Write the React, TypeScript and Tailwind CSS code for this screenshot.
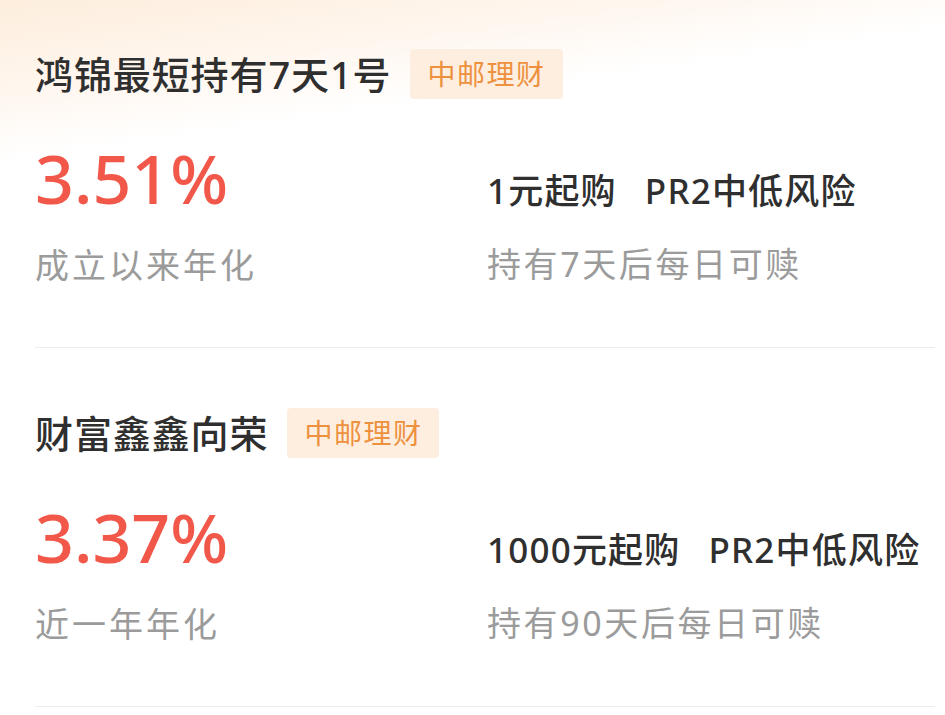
const products = [
  {
    name: '鸿锦最短持有7天1号',
    rate: '3.51%',
    rateLabel: '成立以来年化',
    minBuy: '1元起购',
    risk: 'PR2中低风险',
    redeem: '持有7天后每日可赎',
  },
  {
    name: '财富鑫鑫向荣',
    rate: '3.37%',
    rateLabel: '近一年年化',
    minBuy: '1000元起购',
    risk: 'PR2中低风险',
    redeem: '持有90天后每日可赎',
  },
];

const font = "font-['Noto_Sans','Noto_Sans_CJK_SC',sans-serif]";

function ProductRow({ p }: { p: (typeof products)[number] }) {
  return (
    <div className="pt-[60px] first:pt-[49px]">
      <div className="flex items-center h-[50px]">
        <h3 className="text-[38px] font-medium text-[#2f2f2f] leading-none tracking-[0.9px]">{p.name}</h3>
        <span className="ml-[19px] h-[50px] flex items-center px-[17px] rounded-[4px] bg-[#fdeee0] text-[#ee913e] text-[28px] tracking-[1.5px]">
          中邮理财
        </span>
      </div>

      <div className="flex pb-[60px] border-b border-[#ececec]">
        <div className="w-[452px] pt-[39px]">
          <div className="h-[80px] flex items-center text-[68px] font-medium text-[#f1584a] leading-none">{p.rate}</div>
          <div className="mt-[25px] h-[44px] flex items-center text-[34px] text-[#9b9b9b] tracking-[3px]">
            {p.rateLabel}
          </div>
        </div>
        <div className="pt-[70px]">
          <div className="h-[44px] flex items-center text-[35px] font-medium text-[#2f2f2f] tracking-[1.2px]">
            <span>{p.minBuy}</span>
            <span className="ml-[28px]">{p.risk}</span>
          </div>
          <div className="mt-[29px] h-[44px] flex items-center text-[34px] text-[#9b9b9b] tracking-[2.6px]">
            {p.redeem}
          </div>
        </div>
      </div>
    </div>
  );
}

export default function App() {
  return (
    <div
      className={`${font} w-[945px] h-[715px] overflow-hidden bg-[linear-gradient(172deg,#fdeedd_0px,#fff6ee_90px,#ffffff_160px)]`}
    >
      <div className="pl-[35px] pr-[10px]">
        {products.map((p) => (
          <ProductRow key={p.name} p={p} />
        ))}
      </div>
    </div>
  );
}
